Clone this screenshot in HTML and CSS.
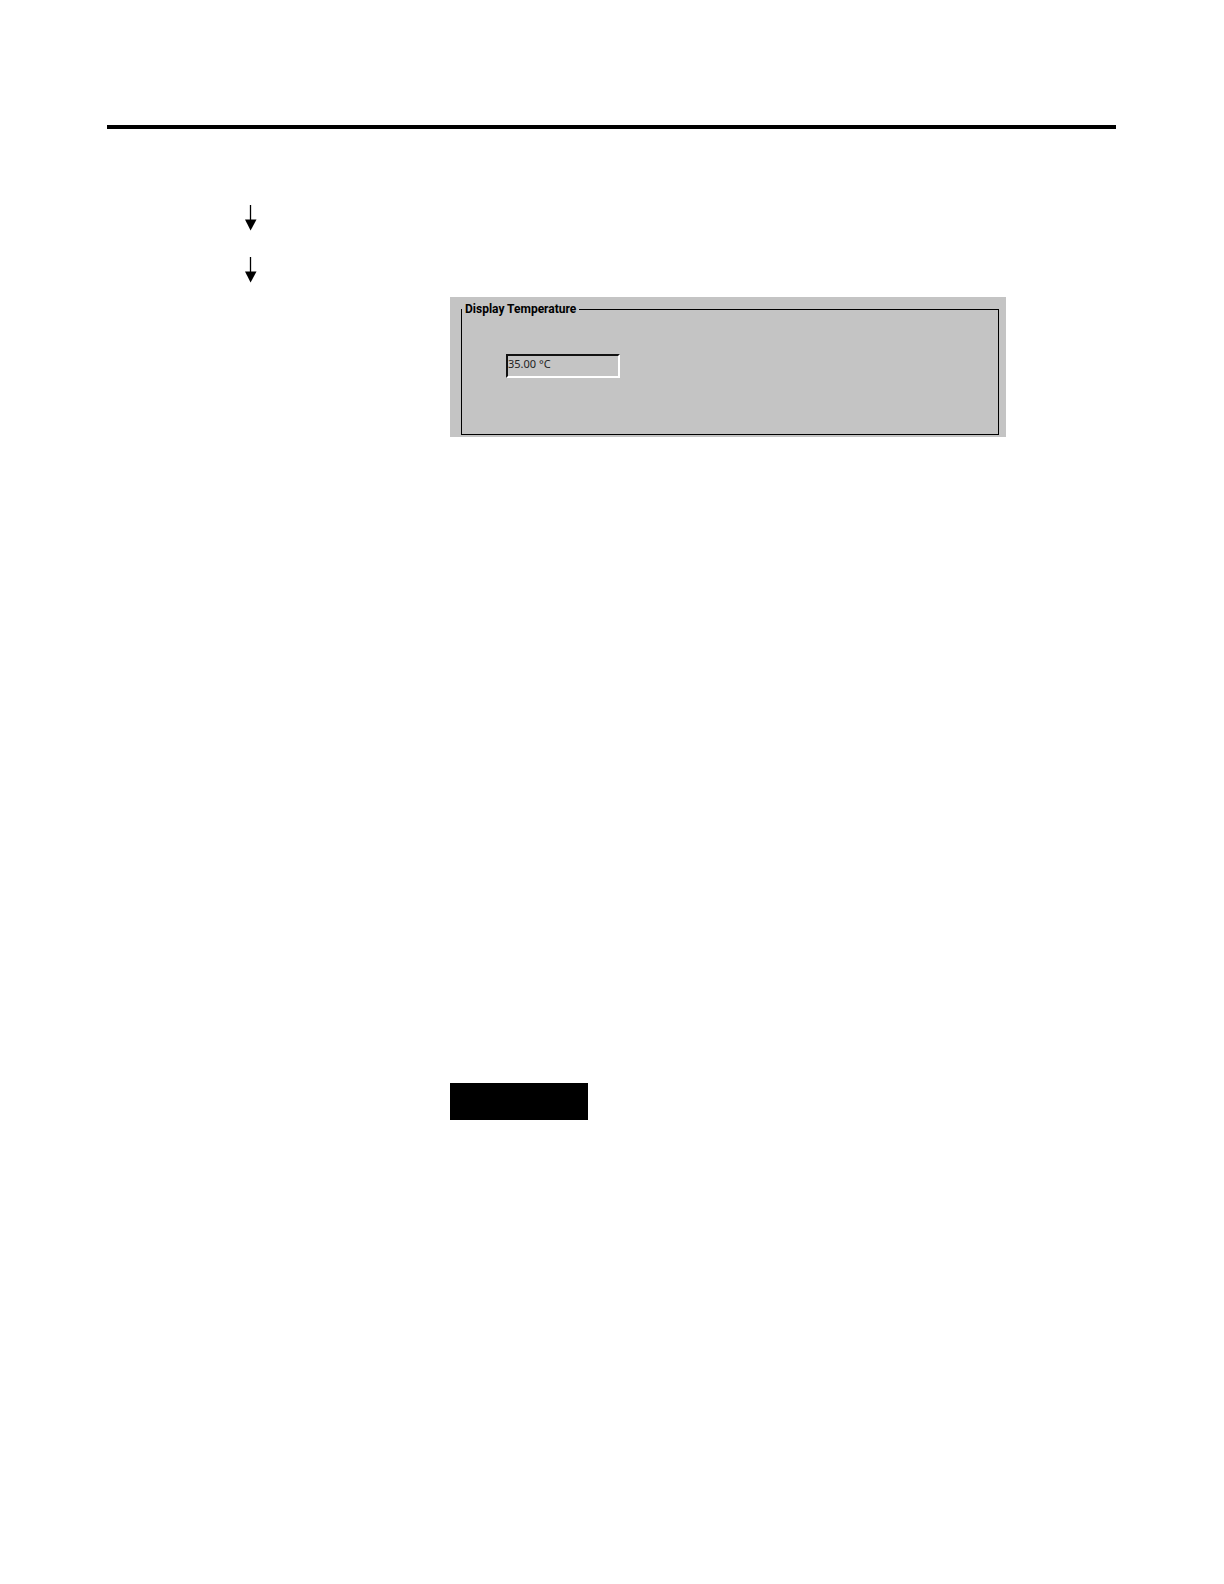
FILE: index.html
```
<!DOCTYPE html>
<html lang="en">
<head>
    <meta charset="UTF-8">
    <meta name="viewport" content="width=device-width, initial-scale=1.0">
    <title>Display Temperature</title>
    <link rel="stylesheet" href="styles.css">
</head>
<body>
<hr class="page-rule">
<main class="content">
    <div class="steps">
        <svg class="arrow" width="12" height="26" viewBox="0 0 12 26" aria-hidden="true">
            <path d="M5.5 0V16" stroke="#000" stroke-width="1.3" fill="none"/>
            <path d="M0 14.5H11.5L5.6 25.5Z"/>
        </svg>
        <svg class="arrow" width="12" height="26" viewBox="0 0 12 26" aria-hidden="true">
            <path d="M5.5 0V16" stroke="#000" stroke-width="1.3" fill="none"/>
            <path d="M0 14.5H11.5L5.6 25.5Z"/>
        </svg>
    </div>
    <div class="panel">
        <fieldset class="group">
            <legend id="temperature-label">Display Temperature</legend>
            <input class="reading" type="text" value="35.00 °C" aria-labelledby="temperature-label" readonly>
        </fieldset>
    </div>
    <div class="block"></div>
</main>
</body>
</html>
```
FILE: styles.css
```
body {
    margin: 0;
    padding: 125px 108px 0 107px;
    background: #fff;
    color: #000;
    font-family: Roboto, Tahoma, sans-serif;
}

.page-rule {
    height: 4px;
    margin: 0;
    border: none;
    background: #000;
}

.content {
    padding: 76px 110px 0 343px;
}

/* arrows sit in the margin to the left of the panel */
.steps {
    display: flex;
    flex-direction: column;
    gap: 26px;
    width: 12px;
    margin-left: -205px;
}

.arrow {
    display: block;
}

.panel {
    margin-top: 14px;
    padding: 5px 7px 2px 11px;
    background: #c4c4c4;
}

.group {
    min-width: 0;
    margin: 0;
    padding: 38px 0 56px;
    border: 1px solid #000;
}

.group legend {
    padding: 0 3px;
    font-size: 12px;
    font-weight: bold;
    line-height: 14px;
}

.reading {
    display: block;
    box-sizing: border-box;
    width: 114px;
    height: 24px;
    margin: 0 0 0 44px;
    padding: 0 0 6px;
    border: 2px solid;
    border-color: #111 #fff #fff #111;
    border-radius: 0;
    background: #c4c4c4;
    color: #222;
    font-family: "Noto Sans", Tahoma, sans-serif;
    font-size: 11px;
}

.reading:focus {
    outline: none;
}

.block {
    width: 138px;
    height: 37px;
    margin-top: 646px;
    background: #000;
}
```
